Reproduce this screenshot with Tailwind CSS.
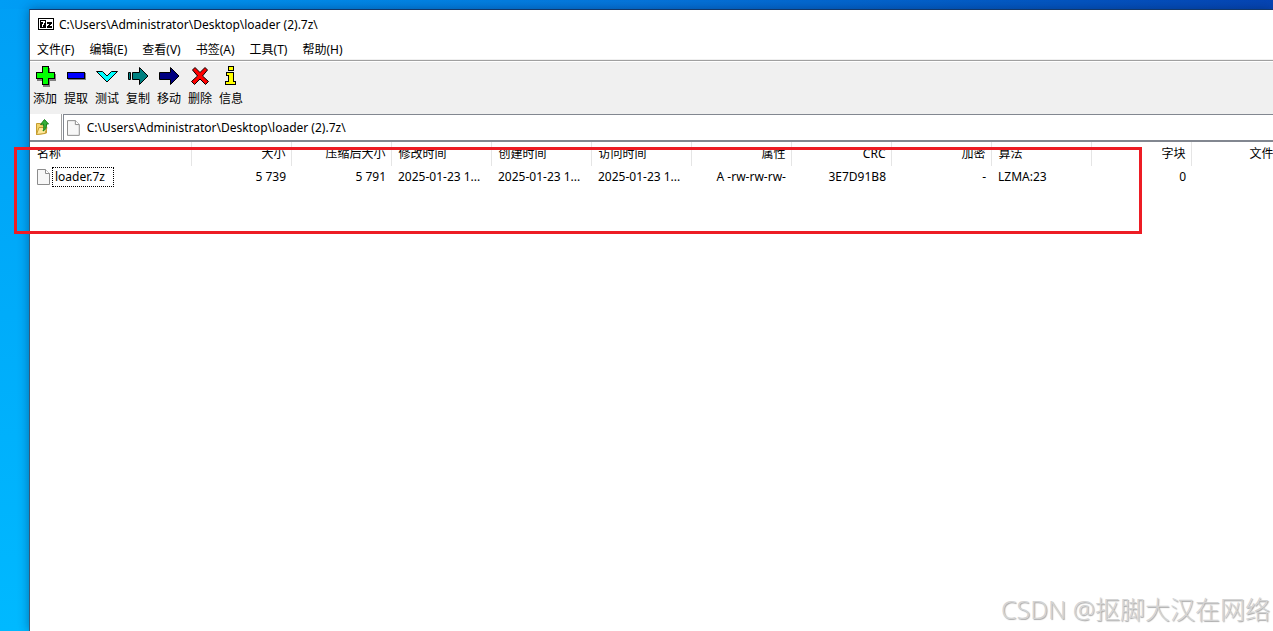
<!DOCTYPE html>
<html lang="zh-CN">
<head>
<meta charset="utf-8">
<title>7-Zip</title>
<script src="https://cdn.jsdelivr.net/npm/@tailwindcss/browser@4"></script>
</head>
<body class="relative flex h-screen flex-col overflow-hidden bg-linear-to-b from-[#009ff5] to-[#00b9ff] font-['Noto_Sans','Noto_Sans_CJK_SC',sans-serif] text-[12px] leading-4 text-black">
<div class="h-[9px] shrink-0 bg-linear-to-r from-[#009df5] via-[#0676dc] to-[#0645b4]"></div>
<main class="ml-[29px] flex min-h-0 flex-1 flex-col border-t border-l border-t-[#12386b] border-l-[#3a5a78] bg-white shadow-[0_0_10px_rgba(0,30,80,0.45)]">
  <header class="flex h-7 shrink-0 items-center gap-[5px] pl-2">
    <svg class="h-3 w-4" viewBox="0 0 16 12" shape-rendering="crispEdges"><path fill="#000" d="M0 0h16v12H0z"/><path fill="#fff" d="M1 1h14v10H1z"/><path fill="#000" d="M2 2h6v8H2z"/><path fill="#fff" d="M3 3h4v2H6v2H5v2H4V6h1V4H3z"/><path fill="#000" d="M9 4h5v2h-1v1h-1v1h2v2H9V8h1V7h1V6H9z"/></svg>
    <h1 class="pt-0.5">C:\Users\Administrator\Desktop\loader (2).7z\</h1>
  </header>
  <nav class="flex h-[22px] shrink-0 items-center gap-[15px] border-b border-[#f0f0f0] pt-0.5 pl-[7px]">
    <button>文件(F)</button><button>编辑(E)</button><button>查看(V)</button><button>书签(A)</button><button>工具(T)</button><button>帮助(H)</button>
  </nav>
  <div class="flex h-[54px] shrink-0 items-start gap-[7px] border-t border-[#a0a0a0] bg-[#f0f0f0] pt-1 pl-[3px] shadow-[inset_0_1px_0_#fff]">
    <button class="flex w-6 flex-col items-center gap-1"><svg class="h-[22px] w-6" viewBox="0 0 24 22" shape-rendering="crispEdges"><path fill="#808080" d="M10 3h7v6h6v7h-6v6h-7v-6H4V9h6z"/><path fill="#0f0" stroke="#000" d="M9.500 1.500h6v6h6v6h-6v6h-6v-6h-6v-6h6z"/></svg>添加</button>
    <button class="flex w-6 flex-col items-center gap-1"><svg class="h-[22px] w-6" viewBox="0 0 24 22" shape-rendering="crispEdges"><path fill="#808080" d="M4 8h18v7H4z"/><path fill="#00f" stroke="#000" d="M3.500 7.500h17v6h-17z"/></svg>提取</button>
    <button class="flex w-6 flex-col items-center gap-1"><svg class="h-[22px] w-6" viewBox="0 0 24 22"><path fill="#0ff" stroke="#000" d="M1.500 6.500h6l4.500 4.500 4.500-4.500h6L12 17z"/></svg>测试</button>
    <button class="flex w-6 flex-col items-center gap-1"><svg class="h-[22px] w-6" viewBox="0 0 24 22"><path fill="#008080" stroke="#000" d="M2.500 7.500h2v7h-2zM6.500 7.500h7v-5l8.500 8.500-8.500 8.500v-5h-7z"/></svg>复制</button>
    <button class="flex w-6 flex-col items-center gap-1"><svg class="h-[22px] w-6" viewBox="0 0 24 22"><path fill="#000080" stroke="#000" d="M2.500 7.500h11v-5l8.500 8.500-8.500 8.500v-5h-11z"/></svg>移动</button>
    <button class="flex w-6 flex-col items-center gap-1"><svg class="h-[22px] w-6" viewBox="0 0 24 22"><path fill="#f00" stroke="#000" d="M4.500 5l2.500-2.500 5 5 5-5L19.500 5l-5 6 6 5.500-3 3-5.500-5.500-5.500 5.500-3-3 6-5.500z"/></svg>删除</button>
    <button class="flex w-6 flex-col items-center gap-1"><svg class="h-[22px] w-6" viewBox="0 0 24 22" shape-rendering="crispEdges"><path fill="#ff0" stroke="#000" d="M9.500 1.500h5v4h-5zM7.500 7.500h7v9h2v3h-10v-3h3v-6h-2z"/></svg>信息</button>
  </div>
  <div class="flex h-[26px] shrink-0 bg-white">
    <button aria-label="上一级" class="flex w-8 items-center justify-center border-r border-[#a0a0a0] pr-[6px]"><svg class="h-4 w-4" viewBox="0 0 16 16"><path fill="#f3d36b" stroke="#c49c30" d="M1.500 4.500h4l1 1.500h5v8l-10 1.500z"/><path fill="#ffe99b" stroke="#c49c30" d="M1.500 15.500l2.500-7h8l-2 6z"/><path fill="#36b036" stroke="#168018" d="M5.500 5.500l4-5 4 4.500h-2c0 4-1 6-3.500 7 1-2 1-4 .5-7z"/></svg></button>
    <label class="ml-px flex flex-1 items-center gap-[7px] border-t border-l border-[#828790] pl-[3px]"><svg class="h-4 w-[13px]" viewBox="0 0 13 16"><path fill="#f7f7f7" stroke="#8c8c8c" d="M.5.500h8l4 4v11H.5z"/><path fill="#fff" stroke="#8c8c8c" d="M8.500.500v4h4"/></svg><input aria-label="路径" class="w-full pt-px outline-none" value="C:\Users\Administrator\Desktop\loader (2).7z\"></label>
  </div>
  <div class="min-h-0 flex-1 overflow-hidden border-t-2 border-[#828790]">
    <table class="w-[1261px] table-fixed border-collapse whitespace-nowrap">
      <colgroup><col class="w-[161px]"><col class="w-[100px]"><col class="w-[100px]"><col class="w-[100px]"><col class="w-[100px]"><col class="w-[100px]"><col class="w-[100px]"><col class="w-[100px]"><col class="w-[100px]"><col class="w-[100px]"><col class="w-[100px]"><col class="w-[100px]"></colgroup>
      <thead><tr class="h-6 text-right *:border-r *:border-[#e5e5e5] *:pr-[5px] *:pl-[7px] *:font-normal"><th class="text-left">名称</th><th>大小</th><th>压缩后大小</th><th class="text-left">修改时间</th><th class="text-left">创建时间</th><th class="text-left">访问时间</th><th>属性</th><th>CRC</th><th>加密</th><th class="text-left">算法</th><th>字块</th><th>文件夹</th></tr></thead>
      <tbody><tr class="h-[22px] text-right *:pr-[5px] *:pl-[7px]"><td class="text-left"><div class="flex items-center gap-[2px]"><svg class="h-4 w-[13px]" viewBox="0 0 13 16"><path fill="#f7f7f7" stroke="#8c8c8c" d="M.5.500h8l4 4v11H.5z"/><path fill="#fff" stroke="#8c8c8c" d="M8.500.500v4h4"/></svg><span class="border border-dotted border-black pr-2 pl-0.5 leading-[18px]">loader.7z</span></div></td><td>5 739</td><td>5 791</td><td class="text-left">2025-01-23 1...</td><td class="text-left">2025-01-23 1...</td><td class="text-left">2025-01-23 1...</td><td>A -rw-rw-rw-</td><td>3E7D91B8</td><td>-</td><td class="text-left">LZMA:23</td><td>0</td><td></td></tr></tbody>
    </table>
  </div>
</main>
<div class="absolute top-[147px] right-[131px] left-[14px] h-[87px] border-3 border-[#ed1c24]"></div>
<p class="absolute right-[3px] bottom-1 text-[25px] leading-9 font-light text-[#d4d4d4] [text-shadow:1px_1px_1px_#a8a8a8]">CSDN @抠脚大汉在网络</p>
</body>
</html>
